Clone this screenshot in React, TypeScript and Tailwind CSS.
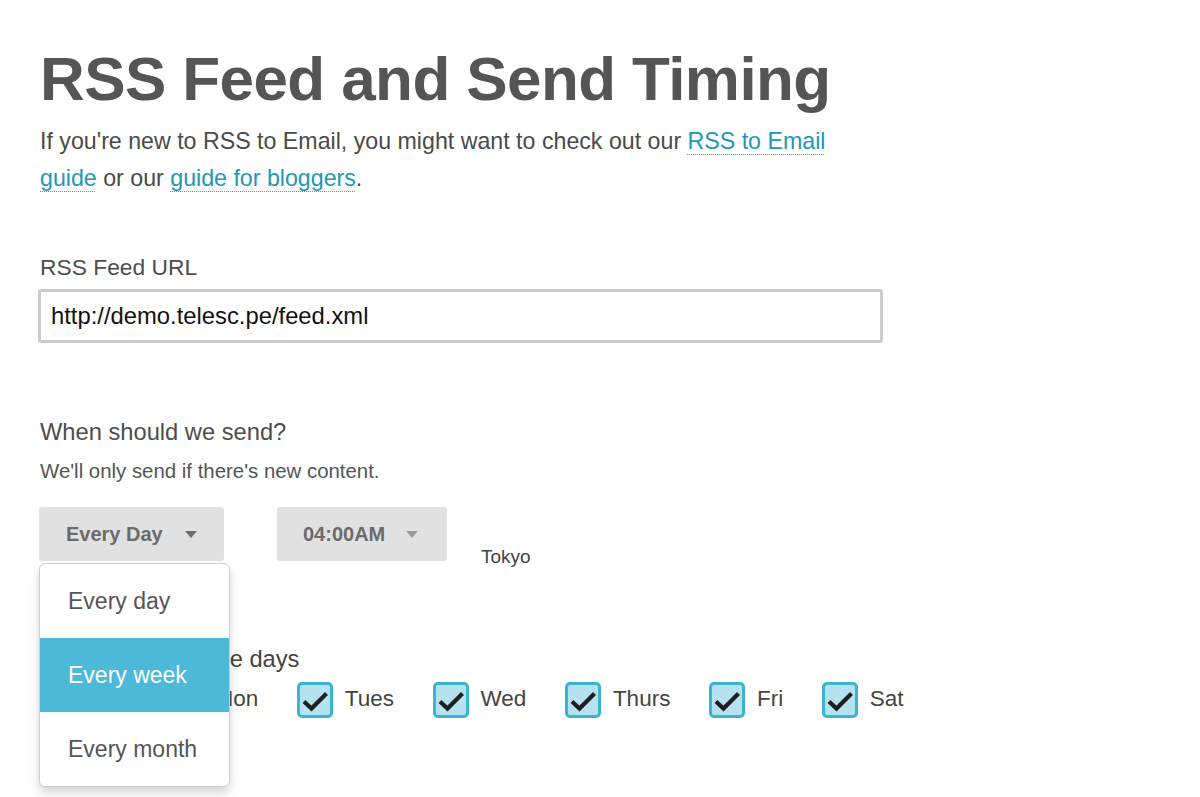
import React from 'react';

const days = ['Sun', 'Mon', 'Tues', 'Wed', 'Thurs', 'Fri', 'Sat'];
const frequencies = ['Every day', 'Every week', 'Every month'];

function Caret({ className }: { className: string }) {
  return (
    <svg width="12" height="7" viewBox="0 0 12 7" className={className}>
      <path d="M0 0H12L6 7Z" fill="currentColor" />
    </svg>
  );
}

function DayCheckbox({ label }: { label: string }) {
  return (
    <label className="flex items-center gap-[12px]">
      <span className="flex h-[36px] w-[36px] shrink-0 items-center justify-center rounded-[5px] border-[3px] border-[#3ab4d1] bg-[#b4e2ee]">
        <svg width="30" height="30" viewBox="0 0 30 30">
          <path d="M4 16.5L11.5 23.5L26.5 8.5" fill="none" stroke="#1f1f1f" strokeWidth="4.2" />
        </svg>
      </span>
      <span className="pb-[3px] text-[22.5px] leading-[28px] text-[#444]">{label}</span>
    </label>
  );
}

export default function App() {
  return (
    <div className="min-h-screen bg-white font-['Liberation_Sans',Arial,sans-serif] text-[#4a4a4a]">
      <div className="pl-[40px] pt-[48px]">
        <h1 className="text-[62px] font-bold leading-[62px] tracking-[-0.6px] text-[#555]">
          RSS Feed and Send Timing
        </h1>
        <p className="mt-[13px] w-[810px] text-[23.2px] leading-[37px]">
          If you're new to RSS to Email, you might want to check out our{' '}
          <a href="#" className="text-[#2198b8] underline decoration-[#2aa3c4] decoration-dotted decoration-1 underline-offset-[5px]">
            RSS to Email guide
          </a>{' '}
          or our{' '}
          <a href="#" className="text-[#2198b8] underline decoration-[#2aa3c4] decoration-dotted decoration-1 underline-offset-[5px]">
            guide for bloggers
          </a>
          .
        </p>

        <div className="mt-[56px] text-[22.8px] leading-[28px] text-[#4d4d4d]">RSS Feed URL</div>
        <input
          readOnly
          value="http://demo.telesc.pe/feed.xml"
          className="-ml-[2px] mt-[8px] block h-[54px] w-[845px] rounded-[3px] border-[3px] border-[#cbcbcb] px-[10px] text-[23.8px] text-[#111] outline-none"
        />

        <div className="mt-[75px] text-[23.7px] leading-[28px] text-[#4d4d4d]">When should we send?</div>
        <div className="mt-[13px] text-[20.4px] leading-[24px] text-[#555]">We'll only send if there's new content.</div>

        <div className="mt-[24px] flex items-start">
          <div className="relative -ml-[1px]">
            <button className="flex h-[54px] w-[185px] items-center rounded-[3px] bg-[#e1e1e1] pl-[27px] text-[20px] font-bold text-[#6b6b6b]">
              Every Day
              <Caret className="ml-[22px] text-[#6e6e6e]" />
            </button>
            <ul className="absolute left-0 top-[56px] z-10 w-[191px] overflow-hidden rounded-[6px] border border-[#cfcfcf] bg-white shadow-[0_6px_10px_rgba(0,0,0,0.16)]">
              {frequencies.map((f) => (
                <li
                  key={f}
                  className={
                    f === 'Every week'
                      ? 'flex h-[74px] items-center bg-[#4cb9d8] pl-[28px] text-[23px] text-white'
                      : 'flex h-[74px] items-center pl-[28px] text-[23px] text-[#555]'
                  }
                >
                  {f}
                </li>
              ))}
            </ul>
          </div>
          <button className="ml-[53px] flex h-[54px] w-[170px] items-center rounded-[3px] bg-[#e1e1e1] pl-[26px] text-[20px] font-bold text-[#6b6b6b]">
            04:00AM
            <Caret className="ml-[21px] text-[#9a9a9a]" />
          </button>
          <span className="ml-[34px] mt-[39px] text-[19px] leading-[22px] text-[#444]">Tokyo</span>
        </div>

        <div className="mt-[77px] text-[23.7px] leading-[28px] text-[#444]">Send only on these days</div>
        <div className="mt-[9px] flex items-center gap-[38.5px]">
          {days.map((d) => (
            <DayCheckbox key={d} label={d} />
          ))}
        </div>
      </div>
    </div>
  );
}
